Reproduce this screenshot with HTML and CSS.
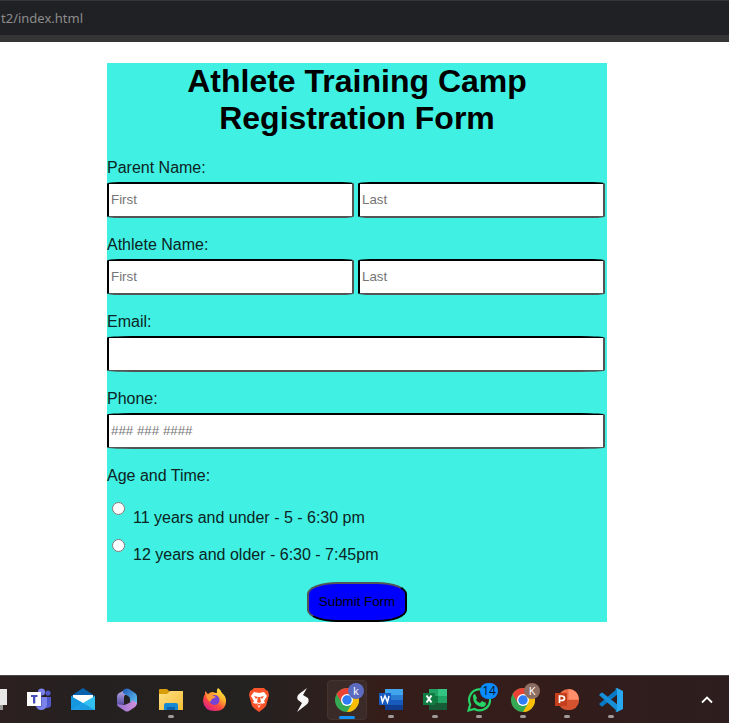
FILE: index.html
```html
<!DOCTYPE html>
<html lang="en">
<head>
<meta charset="utf-8">
<title>Athlete Training Camp</title>
<link rel="stylesheet" href="styles.css">
</head>
<body>
<header class="address-bar"><span class="address">t2/index.html</span></header>
<main>
<form class="camp-form">
  <h1>Athlete Training Camp Registration Form</h1>
  <div class="field">
    <label for="parent-first">Parent Name:</label>
    <div class="inputs">
      <input id="parent-first" type="text" placeholder="First">
      <input type="text" placeholder="Last" aria-label="Last">
    </div>
  </div>
  <div class="field">
    <label for="athlete-first">Athlete Name:</label>
    <div class="inputs">
      <input id="athlete-first" type="text" placeholder="First">
      <input type="text" placeholder="Last" aria-label="Last">
    </div>
  </div>
  <div class="field">
    <label for="email">Email:</label>
    <div class="inputs"><input id="email" type="email"></div>
  </div>
  <div class="field">
    <label for="phone">Phone:</label>
    <div class="inputs"><input id="phone" type="tel" placeholder="### ### ####"></div>
  </div>
  <div class="group-label" id="age-time">Age and Time:</div>
  <div role="radiogroup" aria-labelledby="age-time">
    <label class="option"><input type="radio" name="slot"><span>11 years and under - 5 - 6:30 pm</span></label>
    <label class="option"><input type="radio" name="slot"><span>12 years and older - 6:30 - 7:45pm</span></label>
  </div>
  <button class="submit" type="button">Submit Form</button>
</form>
</main>
<footer class="taskbar">
  <div class="apps">
    <div class="app"><svg viewBox="0 0 24 24"><path fill="#999" d="M1 7h19v15H1z"/><path fill="#e8e8e8" d="M6 1h19v16H6z"/></svg></div>
    <div class="app"><svg viewBox="0 0 24 24"><circle cx="21" cy="5" r="2.6" fill="#5059c9"/><circle cx="14.5" cy="4" r="3.6" fill="#7b83eb"/><path fill="#5059c9" d="M17 9h8v7q-1 4-5 4h-3z"/><path fill="#7b83eb" d="M9 9h11v8q-1 5-6 5-4 0-5-4z"/><path fill="#4b53bc" d="M9 5h6v14H9z" opacity=".6"/><rect y="4" width="14" height="14" fill="#fff"/><path d="M4 7h6.500v2H8.300v6.500H6V9H4z" fill="#464eb8"/></svg></div>
    <div class="app"><svg viewBox="0 0 24 24"><path fill="#0861ac" d="M0 8 12 0l12 8v4H0z"/><path fill="#fff" d="M2 7h20v8H2z"/><path fill="#1597df" d="m0 8 12 7 12 7H0z"/><path fill="#32c0f2" d="M24 8v14H0z"/><path fill="#1b9ce3" d="m12 15 12 7H0z"/></svg></div>
    <div class="app"><svg viewBox="0 0 24 24"><defs><linearGradient id="m1" x2="0" y2="1"><stop stop-color="#c4b2ea"/><stop offset="1" stop-color="#4c429c"/></linearGradient><linearGradient id="m2" x2="1" y2="1"><stop stop-color="#2459b8"/><stop offset="1" stop-color="#61c9f5"/></linearGradient><linearGradient id="m3" x2="1"><stop stop-color="#9570cf"/><stop offset="1" stop-color="#d092dc"/></linearGradient></defs><path fill="url(#m1)" d="M12 1 4 5Q2 6 2 9v7q1 3 4 2l3-2V9q0-2 3-3z"/><path fill="url(#m2)" d="M10 1q2-1 4 0l6 4q2 1 2 4v7l-3 1-4-3v-3q0-2-2-3L8 5V2z"/><path fill="url(#m3)" d="M22 15q0 2-2 4l-6 4q-2 1-4 0l-6-4q-2-1-2-3l6 1q2 0 4-1l4-2 1-2z"/></svg></div>
    <div class="app"><svg viewBox="0 0 24 24"><defs><linearGradient id="f1" x2="1" y2="1"><stop stop-color="#ffe284"/><stop offset="1" stop-color="#f6bc35"/></linearGradient></defs><path fill="#d99d0b" d="M0 2q0-1 1-1h7l3 3v5H0z"/><path fill="url(#f1)" d="M0 6h8l3-3h13v19H0z"/><path fill="#1689d4" d="M5 22v-5q0-2 2-2h10q2 0 2 2v5z"/><path fill="#0e62ac" d="M8 19h8v3H8z"/></svg><i class="running"></i></div>
    <div class="app"><svg viewBox="0 0 24 24"><defs><linearGradient id="x1" x1=".9" x2=".2" y2="1"><stop stop-color="#fff44f"/><stop offset=".35" stop-color="#ffb52c"/><stop offset=".65" stop-color="#ff493e"/><stop offset="1" stop-color="#d61b90"/></linearGradient></defs><path fill="url(#x1)" d="M15 0q3 2 4 5 4 3 4 8 0 10-11 10Q1 23 0 13 0 9 2 6V3l3 3q2-2 5-2 1 1 4 1-1-3 1-5"/><circle cx="11.500" cy="12" r="5" fill="#7543d6"/><path fill="#ff9837" d="M3 7q4-2 6 0l4 2-4 2-2 3Q4 12 3 7"/></svg></div>
    <div class="app"><svg viewBox="0 0 24 24"><path fill="#fb542b" d="M7 0h10l2 2 2 1 1 4-3 11-3 3-4 3-4-3-3-3L2 7l1-4 2-1z"/><path fill="#fff" d="m7 4 5 1 5-1 3 4-3 5 1 2-4 1-2 4-2-4-4-1 1-2-3-5z"/><path fill="#fb542b" d="m7 8 4 1-2 2zm10 0-4 1 2 2zm-6 1h2l1 5-2 1-2-1zM9 15l3 1 3-1-3 3z"/></svg></div>
    <div class="app"><svg viewBox="0 0 24 24"><path fill="#f7f7f7" d="M16 0 8 6q-3 3-1 6l4 3-5 9 9-7q4-3 2-7l-5-3z"/></svg></div>
    <div class="app active"><svg viewBox="0 0 24 24"><g id="chrome"><circle cx="12" cy="12" r="12" fill="#34a853"/><path fill="#ea4335" d="M1.600 6A12 12 0 0 1 22.400 6H12L6.800 15z"/><path fill="#fbbc04" d="M22.400 6A12 12 0 0 1 12 24l5.200-9L12 6z"/><circle cx="12" cy="12" r="6" fill="#fff"/><circle cx="12" cy="12" r="4.700" fill="#2f7df5"/></g></svg><b class="badge violet">k</b><i class="running"></i></div>
    <div class="app"><svg viewBox="0 0 24 24"><path fill="#41a5ee" d="M6 1h18v6H6z"/><path fill="#2b7cd3" d="M6 7h18v5H6z"/><path fill="#185abd" d="M6 12h18v5H6z"/><path fill="#103f91" d="M6 17h18v5H6z"/><path fill="#185abd" d="M0 5h12v12H0z"/><path fill="none" stroke="#fff" stroke-width="1.500" d="m2 8 1.500 6L6 8l2.500 6L10 8"/></svg><i class="running"></i></div>
    <div class="app"><svg viewBox="0 0 24 24"><path fill="#21a366" d="M6 1h9v7H6z"/><path fill="#33c481" d="M15 1h9v7h-9z"/><path fill="#107c41" d="M6 8h9v14H6z"/><path fill="#21a366" d="M15 8h9v7h-9z"/><path fill="#185c37" d="M6 15h18v7H6z"/><path fill="#107c41" d="M0 5h12v12H0z"/><path fill="none" stroke="#fff" stroke-width="2" d="m3.500 7.500 5 7m0-7-5 7"/></svg><i class="running"></i></div>
    <div class="app"><svg viewBox="0 0 24 24"><path fill="none" stroke="#25d366" stroke-width="2.200" d="m1.500 22.500 1.700-6A10.500 10.500 0 1 1 7.500 21z"/><path fill="#25d366" d="m8 6 2 4-1 2q1 2 4 3l2-2 4 2q0 4-4 4Q6 17 6 9q0-3 2-3"/></svg><b class="badge count">14</b><i class="running"></i></div>
    <div class="app"><svg viewBox="0 0 24 24"><use href="#chrome"/></svg><b class="badge brown">K</b><i class="running"></i></div>
    <div class="app"><svg viewBox="0 0 24 24"><circle cx="13.500" cy="11.500" r="10.500" fill="#ed6c47"/><path fill="#ff8f6b" d="M13.500 1A10.500 10.500 0 0 1 24 11.500H13.500z"/><path fill="#d35230" d="M3 12h21q-1 10-10.500 10T3 12"/><path fill="#c43e1c" d="M0 5h12v13H0z"/><path fill="none" stroke="#fff" stroke-width="1.700" d="M4.500 15V8h2q3 0 3 2.200t-3 2.300h-2"/></svg><i class="running"></i></div>
    <div class="app"><svg viewBox="0 0 24 24"><path fill="#0879c5" d="m0 16 2 2q1 1 2 0L19 6V0L0 16"/><path fill="#168ed8" d="m0 7 2-2q1-1 2 0l15 12v7L0 7"/><path fill="#29a8f2" d="m18 0 6 3v18l-6 3-2-1q2 0 2-2V3q0-2-2-2z"/></svg><i class="running"></i></div>
  </div>
  <svg class="chevron" viewBox="0 0 12 8"><path fill="none" stroke="#fff" stroke-width="1.800" d="m1 6.500 5-5 5 5"/></svg>
</footer>
</body>
</html>
```
FILE: styles.css
```css
* { box-sizing: border-box; }
body {
  margin: 0;
  min-height: 100vh;
  display: flex;
  flex-direction: column;
  background: #fff;
  color: #000;
  font: 16px/18px "Liberation Sans", Arial, sans-serif;
  overflow-x: hidden;
}
.address-bar {
  height: 42px;
  padding-left: 1px;
  background: #202124;
  border-top: 1px solid #353535;
  border-bottom: 7px solid #353535;
  line-height: 34px;
}
.address {
  color: #8c8c8c;
  font-family: "Noto Sans", sans-serif;
  font-size: 13px;
}
main {
  flex: 1;
  padding: 21px 15px 53px 0;
}
.camp-form {
  max-width: 500px;
  margin: 0 auto;
  background: #40f0e2;
}
h1 {
  margin: 0 0 22px;
  padding: 0 60px;
  font-size: 32px;
  line-height: 37px;
  text-align: center;
}
.field { margin-bottom: 18px; }
.field label { display: block; margin-bottom: 5px; color: #0c2423; }
.inputs { display: flex; gap: 4px; padding-right: 2px; }
.inputs input {
  flex: 1;
  min-width: 0;
  height: 36px;
  padding: 0 2px 2px;
  border: 2px inset #000;
  border-radius: 5%;
  background: #fff;
  font-family: "Liberation Sans", Arial, sans-serif;
}
.inputs input::placeholder { color: #757575; }
.group-label { margin-bottom: 13px; color: #0c2423; }
.option { display: flex; gap: 8px; padding: 0 0 8px 5px; color: #0c2423; }
.option input { width: 13px; height: 13px; margin: 4px 0 0; }
.option span { padding-top: 11px; }
.submit {
  display: block;
  width: 100px;
  height: 40px;
  margin: 10px auto 0;
  padding: 0 0 2px;
  border: 2px outset #000;
  border-radius: 30%;
  background: #00f;
  color: #000;
  font-family: "Liberation Sans", Arial, sans-serif;
}
.taskbar {
  height: 48px;
  display: flex;
  justify-content: space-between;
  align-items: center;
  padding-right: 16px;
  border-top: 1px solid #4a4848;
  background: linear-gradient(90deg, #2d2020, #242020 12%, #242121 35%, #351e1a 52%, #331c1a 75%, #2d1e1f);
  overflow: hidden;
}
.apps { display: flex; margin-left: -27px; }
.app {
  position: relative;
  width: 44px;
  height: 47px;
  display: flex;
  align-items: center;
  justify-content: center;
}
.app svg { width: 24px; height: 24px; }
.active {
  height: 40px;
  align-self: center;
  margin: 0 2px;
  width: 40px;
  border: 1px solid #45332f;
  border-radius: 4px;
  background: #3a2b29;
}
.running {
  position: absolute;
  bottom: 5px;
  left: 19px;
  width: 6px;
  height: 3px;
  border-radius: 2px;
  background: #a09a99;
}
.active .running { bottom: 0; left: 11px; width: 16px; background: #1593f5; }
.badge {
  position: absolute;
  top: 7px;
  right: 5px;
  width: 16px;
  height: 16px;
  border-radius: 8px;
  font: 11px/16px "Open Sans", sans-serif;
  text-align: center;
  color: #fff;
}
.violet { top: 2px; right: 2px; background: #5c6bc0; }
.brown { background: #8d6e63; }
.count { right: 3px; width: 18px; background: #0a8cff; color: #001427; font-size: 12px; }
.chevron { width: 12px; height: 8px; }
```
